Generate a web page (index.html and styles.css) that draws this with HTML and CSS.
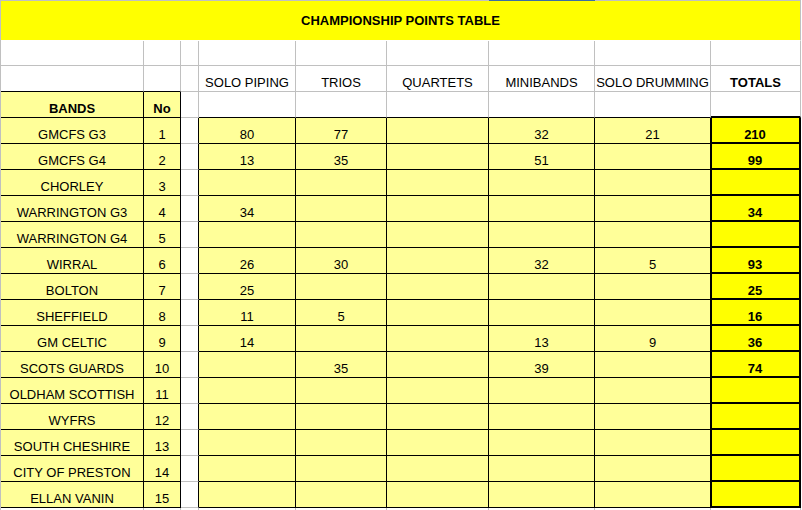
FILE: index.html
```html
<!DOCTYPE html>
<html>
<head>
<meta charset="utf-8">
<link rel="stylesheet" href="styles.css">
<title>Championship Points Table</title>
</head>
<body>
<div class="sheet">
  <div class="sel"></div>
  <div class="c title">CHAMPIONSHIP POINTS TABLE</div>

  <div class="c"></div><div class="c"></div><div class="c"></div><div class="c"></div><div class="c"></div><div class="c"></div><div class="c"></div><div class="c"></div><div class="c"></div>

  <div class="c bb"></div><div class="c bb"></div><div class="c"></div>
  <div class="c">SOLO PIPING</div><div class="c">TRIOS</div><div class="c">QUARTETS</div><div class="c">MINIBANDS</div><div class="c">SOLO DRUMMING</div><div class="c b">TOTALS</div>

  <div class="c y b">BANDS</div><div class="c y b">No</div><div class="c"></div>
  <div class="c bb"></div><div class="c bb"></div><div class="c bb"></div><div class="c bb"></div><div class="c bb"></div><div class="c bb2"></div>

  <div class="c y">GMCFS G3</div><div class="c y">1</div><div class="c br"></div><div class="c y">80</div><div class="c y">77</div><div class="c y"></div><div class="c y">32</div><div class="c y">21</div><div class="c t">210</div>
  <div class="c y">GMCFS G4</div><div class="c y">2</div><div class="c br"></div><div class="c y">13</div><div class="c y">35</div><div class="c y"></div><div class="c y">51</div><div class="c y"></div><div class="c t">99</div>
  <div class="c y">CHORLEY</div><div class="c y">3</div><div class="c br"></div><div class="c y"></div><div class="c y"></div><div class="c y"></div><div class="c y"></div><div class="c y"></div><div class="c t"></div>
  <div class="c y">WARRINGTON G3</div><div class="c y">4</div><div class="c br"></div><div class="c y">34</div><div class="c y"></div><div class="c y"></div><div class="c y"></div><div class="c y"></div><div class="c t">34</div>
  <div class="c y">WARRINGTON G4</div><div class="c y">5</div><div class="c br"></div><div class="c y"></div><div class="c y"></div><div class="c y"></div><div class="c y"></div><div class="c y"></div><div class="c t"></div>
  <div class="c y">WIRRAL</div><div class="c y">6</div><div class="c br"></div><div class="c y">26</div><div class="c y">30</div><div class="c y"></div><div class="c y">32</div><div class="c y">5</div><div class="c t">93</div>
  <div class="c y">BOLTON</div><div class="c y">7</div><div class="c br"></div><div class="c y">25</div><div class="c y"></div><div class="c y"></div><div class="c y"></div><div class="c y"></div><div class="c t">25</div>
  <div class="c y">SHEFFIELD</div><div class="c y">8</div><div class="c br"></div><div class="c y">11</div><div class="c y">5</div><div class="c y"></div><div class="c y"></div><div class="c y"></div><div class="c t">16</div>
  <div class="c y">GM CELTIC</div><div class="c y">9</div><div class="c br"></div><div class="c y">14</div><div class="c y"></div><div class="c y"></div><div class="c y">13</div><div class="c y">9</div><div class="c t">36</div>
  <div class="c y">SCOTS GUARDS</div><div class="c y">10</div><div class="c br"></div><div class="c y"></div><div class="c y">35</div><div class="c y"></div><div class="c y">39</div><div class="c y"></div><div class="c t">74</div>
  <div class="c y">OLDHAM SCOTTISH</div><div class="c y">11</div><div class="c br"></div><div class="c y"></div><div class="c y"></div><div class="c y"></div><div class="c y"></div><div class="c y"></div><div class="c t"></div>
  <div class="c y">WYFRS</div><div class="c y">12</div><div class="c br"></div><div class="c y"></div><div class="c y"></div><div class="c y"></div><div class="c y"></div><div class="c y"></div><div class="c t"></div>
  <div class="c y">SOUTH CHESHIRE</div><div class="c y">13</div><div class="c br"></div><div class="c y"></div><div class="c y"></div><div class="c y"></div><div class="c y"></div><div class="c y"></div><div class="c t"></div>
  <div class="c y">CITY OF PRESTON</div><div class="c y">14</div><div class="c br"></div><div class="c y"></div><div class="c y"></div><div class="c y"></div><div class="c y"></div><div class="c y"></div><div class="c t"></div>
  <div class="c y">ELLAN VANIN</div><div class="c y">15</div><div class="c br"></div><div class="c y"></div><div class="c y"></div><div class="c y"></div><div class="c y"></div><div class="c y"></div><div class="c t"></div>

  <div class="c e"></div><div class="c e"></div><div class="c e"></div><div class="c e"></div><div class="c e"></div><div class="c e"></div><div class="c e"></div><div class="c e"></div><div class="c e"></div>
</div>
</body>
</html>
```
FILE: styles.css
```css
html, body {
  margin: 0;
  padding: 0;
  background: #ffffff;
}

body {
  font-family: "Liberation Sans", Arial, sans-serif;
  font-size: 13px;
  color: #000000;
}

.sheet {
  position: relative;
  display: grid;
  grid-template-columns: 143px 37px 18px 97px 91px 102px 106px 116px 90px;
  grid-template-rows: 40px 25px 26px 26px repeat(15, 26px) 2px;
  width: 800px;
  border-left: 1px solid #c0c0c0;
  border-top: 1px solid #c0c0c0;
}

.c {
  box-sizing: border-box;
  border-right: 1px solid #c0c0c0;
  border-bottom: 1px solid #c0c0c0;
  text-align: center;
  padding-top: 9px;
  line-height: 15px;
  white-space: nowrap;
  overflow: hidden;
}

.title {
  grid-column: 1 / -1;
  background: #ffff00;
  border-bottom-color: #ffffff;
  padding-top: 0;
  line-height: 39px;
  font-weight: bold;
}

.b {
  font-weight: bold;
}

.bb {
  border-bottom-color: #000000;
}

.bb2 {
  border-bottom: 2px solid #000000;
}

.br {
  border-right-color: #000000;
}

.y {
  background: #ffff99;
  border-right-color: #000000;
  border-bottom-color: #000000;
}

.t {
  background: #ffff00;
  border-right: 2px solid #000000;
  border-bottom: 2px solid #000000;
  box-shadow: inset 1px 0 0 #000000;
  font-weight: bold;
}

.e {
  border-bottom: none;
}

.sel {
  position: absolute;
  top: -1px;
  left: 488px;
  width: 106px;
  height: 1px;
  background: #3a6ea5;
}
```
